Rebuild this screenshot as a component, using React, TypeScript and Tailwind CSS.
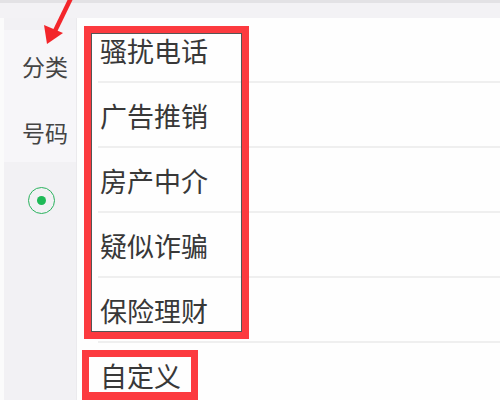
import React from 'react';

const items = ['骚扰电话', '广告推销', '房产中介', '疑似诈骗', '保险理财', '自定义'];

const cjk = { fontFamily: '"Noto Sans CJK SC", "Noto Sans", sans-serif' };

export default function App() {
  return (
    <div className="relative w-[500px] h-[400px] overflow-hidden bg-[#f3f2f5]" style={cjk}>
      <div className="h-[3px] bg-[#e3e2e5]" />
      <div className="h-[15px] bg-[#f3f2f5]" />

      <div className="flex h-[382px]">
        {/* Left column */}
        <div className="w-[77px] pl-[4px] bg-[#fbfbfb] flex">
          <div className="flex-1 flex flex-col bg-[#f2f1f4] border-r border-[#ebeaed]">
            <div className="h-[12px]" />
            <div className="h-[132px] bg-[#f7f6f9] flex flex-col text-[23px] text-[#444]">
              <div className="h-[72px] flex items-center pl-[18px]">分类</div>
              <div className="h-[60px] flex items-center pl-[18px]">号码</div>
            </div>
            <div className="h-[76px] flex items-center pl-[24px]">
              <div className="w-[27px] h-[27px] rounded-full border-[1.5px] border-[#2bb35e] flex items-center justify-center">
                <div className="w-[9px] h-[9px] rounded-full bg-[#1fb957]" />
              </div>
            </div>
          </div>
        </div>

        {/* Right dropdown list */}
        <div className="flex-1 bg-[#fefefe] flex flex-col">
          {items.map((t) => (
            <div key={t} className="h-[65px] ml-[21px] border-b-2 border-[#efefef] flex items-center pl-[2px] pt-[2px] text-[27px] text-[#383838] leading-none shrink-0">
              {t}
            </div>
          ))}
        </div>
      </div>

      {/* annotation boxes */}
      <div className="absolute left-[84px] top-[26px] w-[165px] h-[313px] border-[7px] border-[#fc3a3f]">
        <div className="w-full h-full border border-[#555]" />
      </div>
      <div className="absolute left-[82px] top-[350px] w-[116px] h-[50px] border-[7px] border-b-[8px] border-[#fc3a3f]" />

      {/* arrow */}
      <svg className="absolute left-0 top-0" width="90" height="50" viewBox="0 0 90 50">
        <line x1="71" y1="-2" x2="55" y2="31" stroke="#f3262b" strokeWidth="4.5" />
        <polygon points="47,44 44,25 63,33" fill="#f3262b" />
      </svg>
    </div>
  );
}
